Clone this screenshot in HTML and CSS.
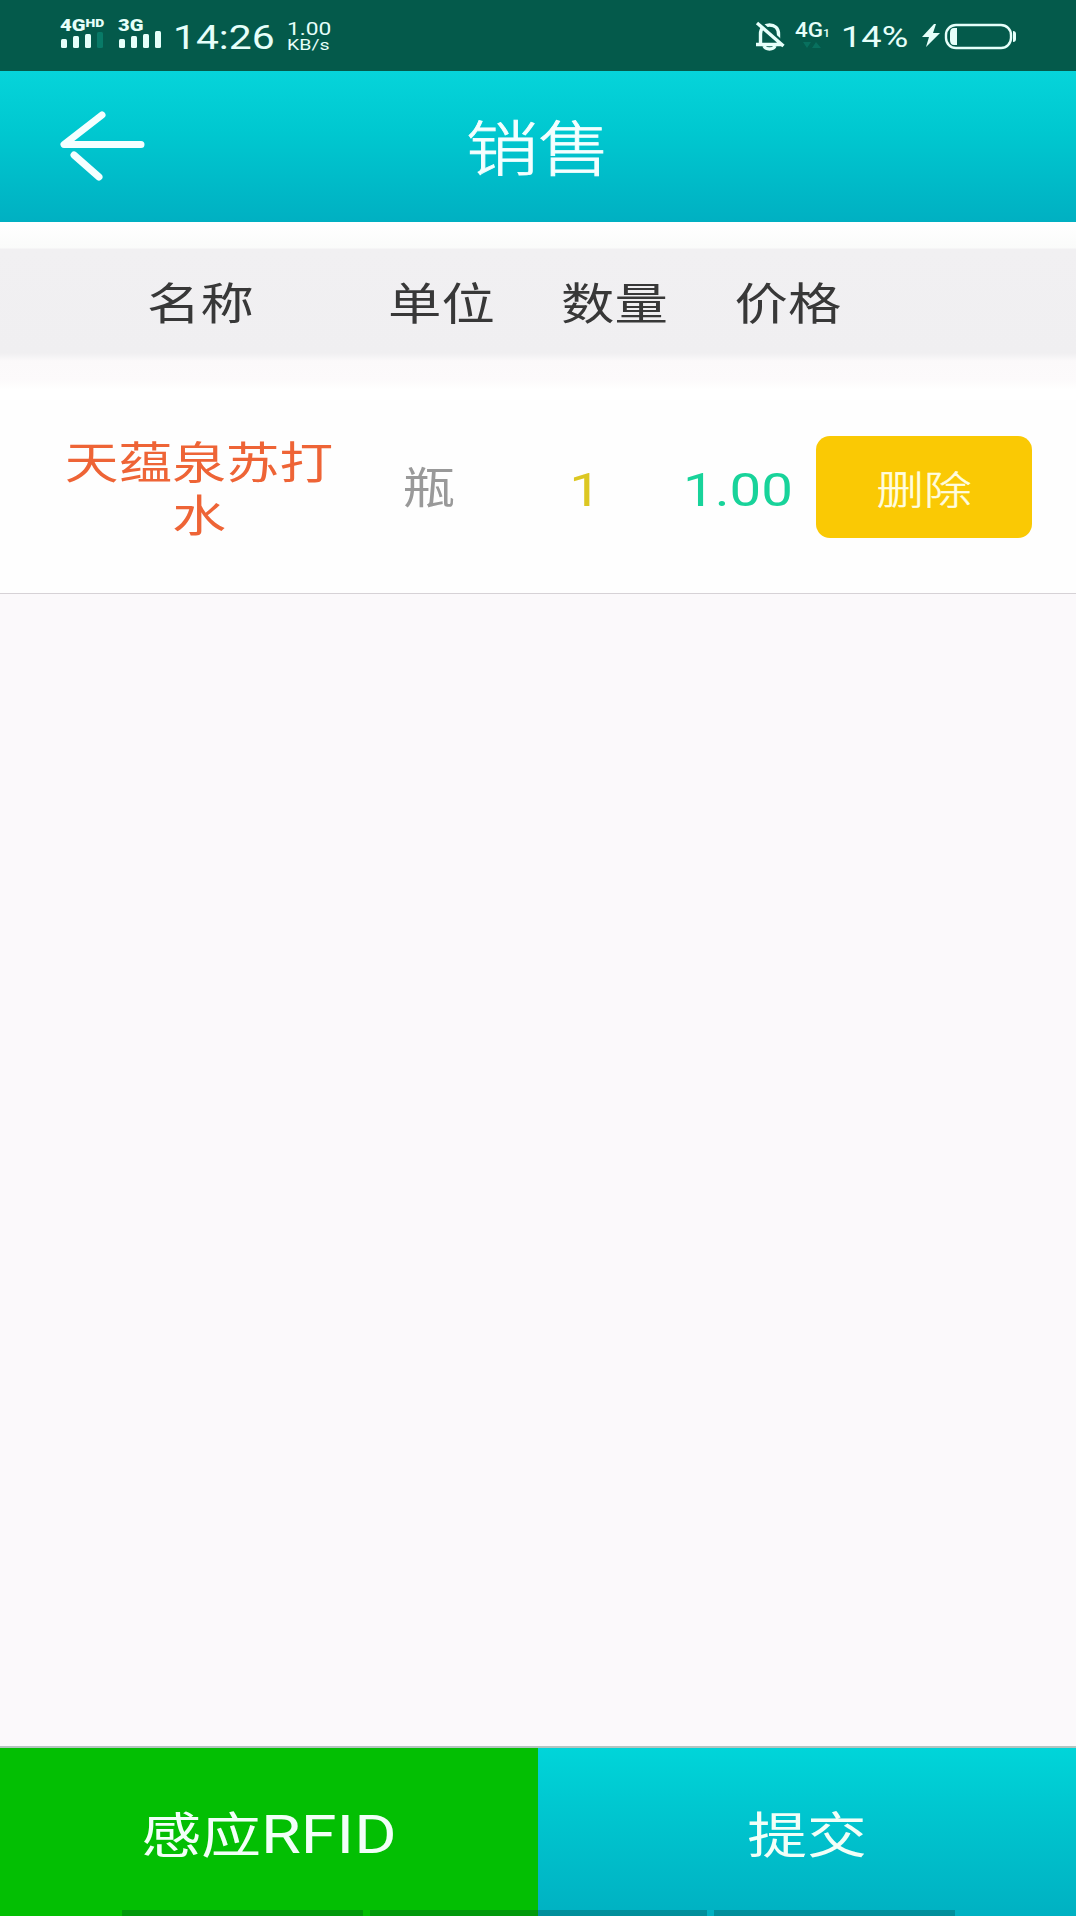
FILE: index.html
```html
<!DOCTYPE html>
<html lang="zh-CN">
<head>
<meta charset="utf-8">
<title>销售</title>
<link rel="stylesheet" href="styles.css">
</head>
<body>
<div class="app">
  <div class="status">
    <div class="signal signal-hd">
      <span class="net"><b>4G</b><sup>HD</sup></span>
      <svg width="44" height="17" viewBox="0 0 44 17"><g fill="#e6fffa"><rect x="1" y="8" width="6" height="9" rx="1.5"/><rect x="13" y="5" width="6" height="12" rx="1.5"/><rect x="25" y="3" width="6" height="14" rx="1.5"/></g><rect x="37" y="1" width="6" height="16" rx="1.5" fill="#087a67"/></svg>
    </div>
    <div class="signal">
      <span class="net"><b>3G</b></span>
      <svg width="44" height="17" viewBox="0 0 44 17"><g fill="#e6fffa"><rect x="1" y="8" width="6" height="9" rx="1.5"/><rect x="13" y="5" width="6" height="12" rx="1.5"/><rect x="25" y="3" width="6" height="14" rx="1.5"/><rect x="37" y="0" width="6" height="17" rx="1.5"/></g></svg>
    </div>
    <span class="clock">14:26</span>
    <div class="speed"><span class="rate">1.00</span><span class="per">KB/s</span></div>
    <div class="spacer"></div>
    <svg class="bell" width="32" height="32" viewBox="0 0 32 32" fill="none" stroke="#e6fffa" stroke-width="3.4"><path d="M2 24.500h26M6.500 24V14c0-6 4-9 9-9s9 3 9 9v10"/><path d="M10 26c1.500 4 9.500 4 11 0" /><path d="M5 2l26 23" stroke="#045a4b" stroke-width="4"/><path d="M3 3l26.500 23"/></svg>
    <div class="data"><span class="net">4G<i>1</i></span><svg width="18" height="6" viewBox="0 0 18 6" fill="#08705e"><path d="M0 0h8L4 6zM9 6l4-6 5 6z"/></svg></div>
    <span class="percent">14%</span>
    <svg class="power" width="98" height="28" viewBox="0 0 98 28"><path d="M14 2L2 15h7L6 25 20 11h-7L16 2z" fill="#e6fffa"/><rect x="26" y="3" width="65" height="23" rx="10" fill="none" stroke="#e6fffa" stroke-width="2.400"/><path d="M37 6v17h-3q-4 0-4-5v-7q0-5 4-5z" fill="#e6fffa"/><path d="M93 9q3 0 3 3v5q0 3-3 3z" fill="#e6fffa"/></svg>
  </div>

  <header class="bar">
    <svg class="back" width="88" height="72" viewBox="0 0 88 72" fill="none" stroke="#f4ffff" stroke-width="7" stroke-linecap="round" stroke-linejoin="round"><path d="M45 6L7 35.500H84M17 46L42 68"/></svg>
    <h1>销售</h1>
  </header>

  <div class="thead">
    <span>名称</span><span>单位</span><span>数量</span><span>价格</span>
  </div>

  <div class="item">
    <div class="name">天蕴泉苏打<br>水</div>
    <span class="unit">瓶</span>
    <span class="qty">1</span>
    <span class="price">1.00</span>
    <button class="delete"><span>删除</span></button>
  </div>

  <main class="blank"></main>

  <footer class="actions">
    <div class="action scan"><span>感应<em>RFID</em></span></div>
    <div class="action submit"><span>提交</span></div>
    <div class="hints"><i></i><i></i><i></i></div>
  </footer>
</div>
</body>
</html>
```
FILE: styles.css
```css
* { box-sizing: border-box; }
body { margin: 0; font-family: Roboto, "Noto Sans CJK SC", sans-serif; }
svg { display: block; }

.app { display: flex; flex-direction: column; width: 1076px; height: 1916px; background: #fbf9fb; overflow: hidden; }

/* system status bar */
.status { display: flex; height: 71px; flex: none; padding: 0 58px 0 60px; background: #045a4b; color: #e6fffa; white-space: nowrap; }
.signal { width: 44px; padding-top: 17px; margin-right: 14px; }
.signal .net { display: flex; height: 14px; line-height: 18px; font-size: 16px; transform: scaleX(1.26); transform-origin: left; }
.signal .net b { font-weight: 900; }
.signal .net sup { font-size: 11px; font-weight: 900; line-height: 13px; vertical-align: top; }
.clock { width: 102px; margin: 17px 10px 0 -3px; font-size: 34px; line-height: 40px; transform: scaleX(1.2); transform-origin: left; }
.speed { display: flex; flex-direction: column; padding-top: 20px; margin-left: 2px; width: 50px; }
.speed span { transform: scaleX(1.3); transform-origin: left; }
.rate { font-size: 17.500px; line-height: 18px; }
.per { font-size: 15px; line-height: 15px; }
.spacer { flex: 1; }
.bell { margin-top: 20px; }
.data { width: 40px; margin: 18px 0 0 9px; }
.data .net { display: block; height: 24px; font-size: 20px; line-height: 24px; font-weight: 500; transform: scaleX(1.12); transform-origin: left; }
.data i { font-size: 11px; font-style: normal; }
.data svg { margin-left: 8px; }
.percent { width: 69px; margin: 19px 0 0 6px; font-size: 29px; line-height: 36px; transform: scaleX(1.25); transform-origin: left; }
.power { margin: 22px 0 0 10px; }

/* title bar */
.bar { display: grid; grid-template-columns: 1fr auto 1fr; height: 151px; flex: none; padding: 38px 0 0 57px; background: linear-gradient(#06d4da, #00c8d0 40%, #00b0c2); color: #f4ffff; }
.bar h1 { margin: 7px 57px 0 0; font-size: 60px; line-height: 70px; font-weight: 300; -webkit-text-stroke: .8px; transform: scaleX(1.21); }

/* list heading */
.thead { display: grid; grid-template-columns: 355px 173px 173px 174px; height: 178px; flex: none; padding-top: 50px; background: linear-gradient(#fff, #fafbfa 26px, #f1f0f2 27px, #f0eff1 131px, #fbf9fa 139px, #fcfafb 158px, #fff 168px); color: #383838; font-size: 44.500px; line-height: 66px; text-align: center; }
.thead span { transform: scaleX(1.2); }
.thead span:first-child { margin-left: 46px; }

/* goods row */
.item { display: grid; grid-template-columns: 398px 62px 200px 156px 1fr; height: 194px; flex: none; background: #fefefe; border-bottom: 1px solid #d6d2d6; font-size: 44px; line-height: 53px; text-align: center; white-space: nowrap; }
.name { padding-top: 38px; color: #ee6436; transform: scaleX(1.22); }
.unit, .qty, .price { padding-top: 63px; transform: scaleX(1.2); }
.unit { color: #999; }
.qty { padding-left: 42px; color: #dcc722; font-size: 47px; }
.price { color: #18d39a; font-size: 47px; }
.delete { justify-self: end; width: 216px; height: 102px; margin: 36px 44px 0 0; padding: 0; border: 0; border-radius: 14px; background: #fac904; color: #fffde0; font: 300 39px/100px "Noto Sans CJK SC", sans-serif; }
.delete span { display: block; -webkit-text-stroke: .5px; transform: scaleX(1.22); }

.blank { flex: 1; }

/* bottom actions */
.actions { position: relative; display: grid; grid-template-columns: 1fr 1fr; height: 170px; flex: none; border-top: 2px solid #b4c4c0; color: #f2fff8; font-size: 49px; text-align: center; }
.action { padding-top: 50px; line-height: 74px; }
.action span { display: block; transform: scaleX(1.22); }
.action em { font-style: normal; font-size: 53px; }
.scan { background: #03bf03; }
.submit { background: linear-gradient(#00d5d9, #00c7d0 35%, #00b1c2); }
.submit span { padding-top: 2px; }
.hints { position: absolute; left: 122px; bottom: 0; display: flex; gap: 7px; }
.hints i { width: 241px; height: 6px; background: rgba(0, 40, 40, .25); }
.hints i:nth-child(2) { width: 337px; }
```
